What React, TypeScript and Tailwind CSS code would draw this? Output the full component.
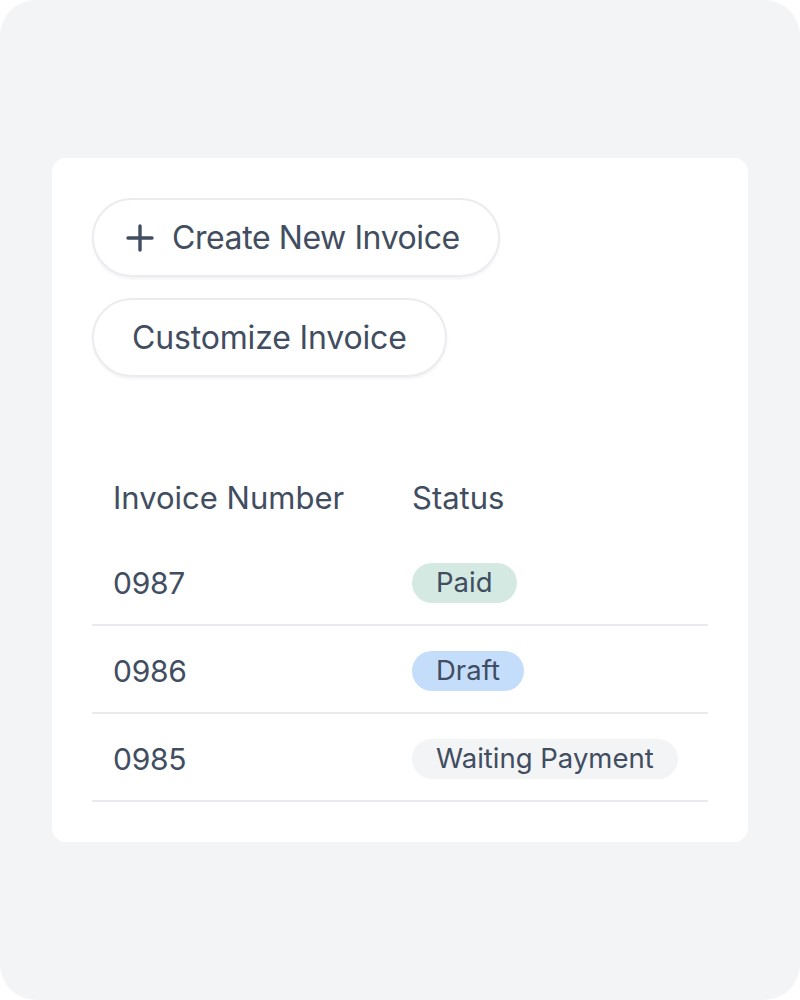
const ROWS = [
  { number: '0987', status: 'Paid', pill: 'bg-[#d5e9e3]' },
  { number: '0986', status: 'Draft', pill: 'bg-[#c4ddfb]' },
  { number: '0985', status: 'Waiting Payment', pill: 'bg-[#f3f4f6]' },
];

const PlusIcon = () => (
  <svg width="28" height="28" viewBox="0 0 28 28" fill="none" stroke="currentColor" strokeWidth="3.4" strokeLinecap="round">
    <path d="M14 2v24M2 14h24" />
  </svg>
);

export default function App() {
  return (
    <div className="w-[800px] h-[1000px] bg-white" style={{ fontFamily: 'Inter, "Noto Sans", sans-serif' }}>
      <div className="w-full h-full rounded-[36px] bg-[#f3f4f6] flex items-center justify-center">
        <div className="w-[696px] bg-white rounded-[14px] p-10 text-[#414d60]">
          <div className="flex flex-col items-start gap-[21px]">
            <button className="h-[79px] flex items-center gap-[18px] pl-[32px] pr-[38px] rounded-full border-2 border-[#eaecef] bg-white shadow-[0_2px_3px_rgba(15,23,42,0.05)] text-[32px] leading-none tracking-[-0.013em]">
              <PlusIcon />
              <span>Create New Invoice</span>
            </button>
            <button className="h-[79px] flex items-center pl-[38px] pr-[38px] rounded-full border-2 border-[#eaecef] bg-white shadow-[0_2px_3px_rgba(15,23,42,0.05)] text-[32px] leading-none tracking-[-0.005em]">
              Customize Invoice
            </button>
          </div>

          <div className="mt-[75px]">
            <div className="grid grid-cols-[320px_1fr] h-[86px] items-center pt-[5px] text-[31px] leading-none">
              <div className="pl-[21px]">Invoice Number</div>
              <div>Status</div>
            </div>
            {ROWS.map((r) => (
              <div key={r.number} className="grid grid-cols-[320px_1fr] h-[88px] items-center pt-[3px] border-b-2 border-[#e8eaee]">
                <div className="pl-[21px] text-[30px] leading-none tracking-[-0.01em]">{r.number}</div>
                <div>
                  <span className={`inline-flex items-center h-[40px] px-6 rounded-full text-[27.5px] leading-none ${r.pill}`}>
                    {r.status}
                  </span>
                </div>
              </div>
            ))}
          </div>
        </div>
      </div>
    </div>
  );
}
